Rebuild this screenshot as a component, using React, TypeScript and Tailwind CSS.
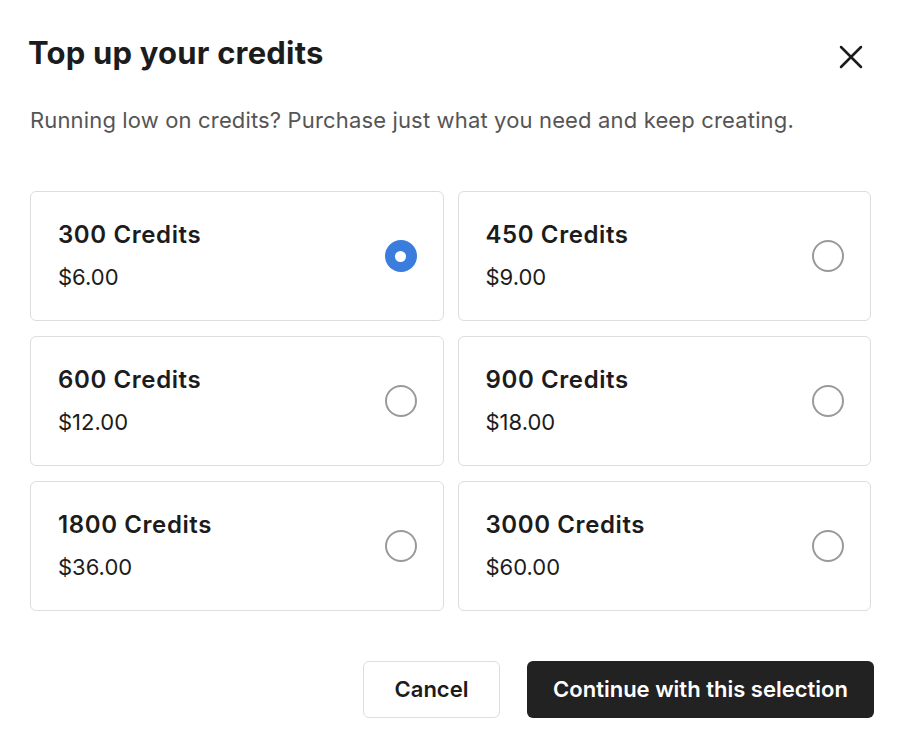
import { useState } from 'react';

const PACKS = [
  { credits: 300, price: '$6.00' },
  { credits: 450, price: '$9.00' },
  { credits: 600, price: '$12.00' },
  { credits: 900, price: '$18.00' },
  { credits: 1800, price: '$36.00' },
  { credits: 3000, price: '$60.00' },
];

function Radio({ checked }: { checked: boolean }) {
  if (checked) {
    return (
      <span className="w-[32px] h-[32px] rounded-full bg-[#3b7ddd] flex items-center justify-center">
        <span className="w-[11px] h-[11px] rounded-full bg-white" />
      </span>
    );
  }
  return <span className="w-[32px] h-[32px] rounded-full border-2 border-[#9a9a9a]" />;
}

export default function App() {
  const [selected, setSelected] = useState(300);

  return (
    <div className="min-h-screen bg-white font-['Inter',sans-serif] text-[#1c1c1c] pl-[30px] pr-[32px] pt-[34px]">
      <div className="flex items-start justify-between">
        <h1 className="text-[31px] leading-[38px] font-bold tracking-[0.2px] -ml-[2px]">Top up your credits</h1>
        <button className="mr-[8px] mt-[8px] text-[#1c1c1c]">
          <svg width="30" height="30" viewBox="0 0 24 24" fill="none" stroke="currentColor" strokeWidth="2" strokeLinecap="round">
            <path d="M4 4 L20 20 M20 4 L4 20" />
          </svg>
        </button>
      </div>
      <p className="mt-[33px] text-[22px] leading-[30px] tracking-[0.15px] text-[#555555]">
        Running low on credits? Purchase just what you need and keep creating.
      </p>

      <div className="mt-[56px] w-[841px] grid grid-cols-2 gap-x-[14px] gap-y-[15px]">
        {PACKS.map((p) => (
          <button
            key={p.credits}
            onClick={() => setSelected(p.credits)}
            className="h-[130px] rounded-[6px] border-[1.5px] border-[#dddddd] flex items-center justify-between pl-[27px] pr-[26px] text-left"
          >
            <div>
              <div className="text-[24px] font-semibold leading-[28px] tracking-[0.6px]">{p.credits} Credits</div>
              <div className="mt-[14px] text-[22px] leading-[28px]">{p.price}</div>
            </div>
            <Radio checked={selected === p.credits} />
          </button>
        ))}
      </div>

      <div className="mt-[50px] flex justify-end gap-[27px]">
        <button className="h-[57px] w-[137px] rounded-[6px] border-[1.5px] border-[#dddddd] text-[22px] font-semibold">
          Cancel
        </button>
        <button className="h-[57px] w-[347px] rounded-[6px] bg-[#222222] text-white text-[22px] font-semibold">
          Continue with this selection
        </button>
      </div>
    </div>
  );
}
